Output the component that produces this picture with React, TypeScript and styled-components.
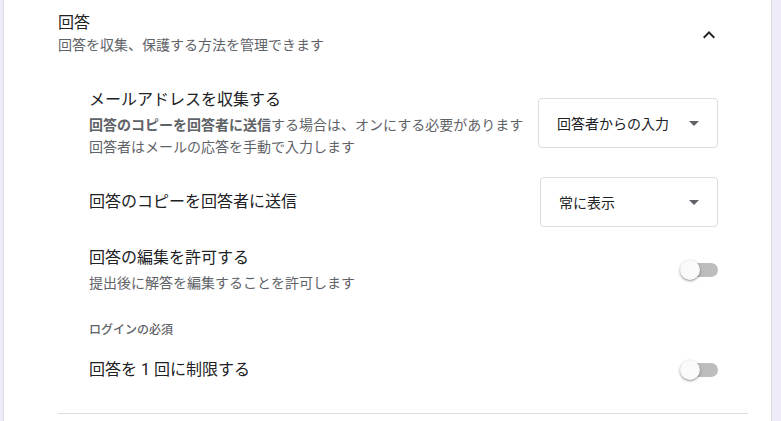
import styled, { createGlobalStyle } from "styled-components";

const GlobalStyle = createGlobalStyle`
  html, body {
    margin: 0;
    padding: 0;
    background: #f0ebf8;
    font-family: Roboto, "Noto Sans CJK JP", sans-serif;
    color: #202124;
  }
`;

const Page = styled.div`
  display: flex;
  padding: 0 9px 0 3px;
  height: 421px;
  overflow: hidden;
`;

const Card = styled.section`
  flex: 1;
  background: #fff;
  border-left: 1px solid #dadce0;
  border-right: 1px solid #dadce0;
  padding: 11px 23px 0 54px;
`;

const Header = styled.header`
  display: flex;
  align-items: center;
  justify-content: space-between;
`;

const HeaderTitle = styled.h2`
  margin: 0;
  font-size: 16px;
  font-weight: 400;
  line-height: 24px;
  color: #202124;
`;

const HeaderSub = styled.p`
  margin: 0;
  font-size: 14px;
  line-height: 20px;
  color: #5f6368;
`;

const CollapseButton = styled.button`
  width: 40px;
  height: 40px;
  margin: 3px 19px 0 0;
  border: none;
  background: none;
  padding: 0;
  display: flex;
  align-items: center;
  justify-content: center;
  color: #202124;
`;

const SettingsList = styled.div`
  display: flex;
  flex-direction: column;
  gap: 19px;
  padding: 33px 30px 31px 31px;
`;

const Row = styled.div`
  display: flex;
  align-items: center;
  justify-content: space-between;
  gap: 12px;
`;

const RowText = styled.div`
  display: flex;
  flex-direction: column;
`;

const RowTitle = styled.div`
  font-size: 16px;
  line-height: 24px;
  color: #202124;
`;

const RowDesc = styled.div`
  margin-top: 2px;
  font-size: 14px;
  line-height: 22px;
  color: #5f6368;

  b {
    font-weight: 700;
  }
`;

const GroupLabel = styled.div`
  padding: 9px 0 1px;
  font-size: 12px;
  line-height: 16px;
  font-weight: 500;
  color: #5f6368;
`;

const Select = styled.div<{ $width: number }>`
  box-sizing: border-box;
  width: ${(p) => p.$width}px;
  height: 50px;
  flex-shrink: 0;
  display: flex;
  align-items: center;
  justify-content: space-between;
  padding: 0 18px;
  border: 1px solid #dadce0;
  border-radius: 4px;
  font-size: 14px;
  color: #202124;
`;

const Caret = styled.span`
  width: 0;
  height: 0;
  border-left: 5px solid transparent;
  border-right: 5px solid transparent;
  border-top: 5px solid #5f6368;
`;

const Toggle = styled.div`
  position: relative;
  width: 38px;
  height: 20px;
  flex-shrink: 0;
`;

const Track = styled.span`
  position: absolute;
  left: 2px;
  top: 3px;
  width: 36px;
  height: 14px;
  border-radius: 7px;
  background: #bdbdbd;
`;

const Thumb = styled.span`
  position: absolute;
  left: 0;
  top: 0;
  width: 20px;
  height: 20px;
  border-radius: 50%;
  background: #fafafa;
  box-shadow: 0 1px 3px rgba(0, 0, 0, 0.35), 0 1px 1px rgba(0, 0, 0, 0.14);
`;

const Divider = styled.hr`
  margin: 0;
  border: none;
  border-top: 1px solid #dadce0;
`;

const Switch = () => (
  <Toggle>
    <Track />
    <Thumb />
  </Toggle>
);

export default function App() {
  return (
    <>
      <GlobalStyle />
      <Page>
        <Card>
          <Header>
            <div>
              <HeaderTitle>回答</HeaderTitle>
              <HeaderSub>回答を収集、保護する方法を管理できます</HeaderSub>
            </div>
            <CollapseButton aria-label="折りたたむ">
              <svg width="24" height="24" viewBox="0 0 24 24">
                <path d="M12 8l-6 6 1.41 1.41L12 10.83l4.59 4.58L18 14z" fill="currentColor" />
              </svg>
            </CollapseButton>
          </Header>

          <SettingsList>
            <Row>
              <RowText>
                <RowTitle>メールアドレスを収集する</RowTitle>
                <RowDesc>
                  <b>回答のコピーを回答者に送信</b>する場合は、オンにする必要があります
                  <br />
                  回答者はメールの応答を手動で入力します
                </RowDesc>
              </RowText>
              <Select $width={180}>
                回答者からの入力
                <Caret />
              </Select>
            </Row>

            <Row>
              <RowTitle>回答のコピーを回答者に送信</RowTitle>
              <Select $width={178}>
                常に表示
                <Caret />
              </Select>
            </Row>

            <Row>
              <RowText>
                <RowTitle>回答の編集を許可する</RowTitle>
                <RowDesc>提出後に解答を編集することを許可します</RowDesc>
              </RowText>
              <Switch />
            </Row>

            <GroupLabel>ログインの必須</GroupLabel>

            <Row>
              <RowTitle>回答を 1 回に制限する</RowTitle>
              <Switch />
            </Row>
          </SettingsList>

          <Divider />
        </Card>
      </Page>
    </>
  );
}
